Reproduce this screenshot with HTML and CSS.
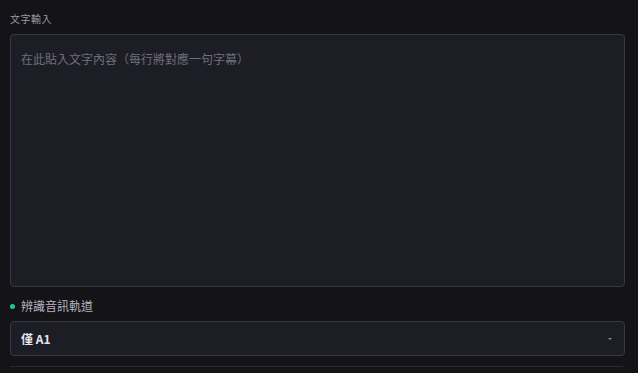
FILE: index.html
```html
<!DOCTYPE html>
<html lang="zh-Hant">
<head>
<meta charset="utf-8">
<link rel="stylesheet" href="styles.css">
</head>
<body>
<div class="page">
  <div class="field">
    <div class="label-small">文字輸入</div>
    <div class="textarea"><span class="placeholder">在此貼入文字內容（每行將對應一句字幕）</span></div>
  </div>
  <div class="field field-track">
    <div class="label-main"><span class="dot"></span>辨識音訊軌道</div>
    <div class="select">
      <span class="select-value">僅 A1</span>
      <span class="caret"></span>
    </div>
  </div>
  <div class="divider"></div>
</div>
</body>
</html>
```
FILE: styles.css
```css
html, body {
  margin: 0;
  padding: 0;
  background: #141318;
  height: 100%;
  overflow: hidden;
}
.page {
  width: 615px;
  padding: 12px 0 0 10px;
  font-family: "Noto Sans CJK TC", "Noto Sans", sans-serif;
}
.label-small {
  font-size: 10px;
  line-height: 14px;
  color: #9c9ba6;
  letter-spacing: 0.5px;
  margin-bottom: 8px;
}
.textarea {
  height: 253px;
  background: #1d1d26;
  border: 1px solid #393943;
  border-radius: 4px;
  padding: 10px 10px;
  box-sizing: border-box;
}
.placeholder {
  font-size: 12px;
  line-height: 18px;
  color: #706f7a;
}
.field-track {
  margin-top: 11px;
}
.label-main {
  display: flex;
  align-items: center;
  font-size: 12px;
  line-height: 16px;
  color: #b5b4bf;
  margin-bottom: 7px;
}
.dot {
  width: 5px;
  height: 5px;
  border-radius: 50%;
  background: #22c39a;
  margin: 0 6px 0 0;
}
.select {
  height: 35px;
  box-sizing: border-box;
  background: #1d1d26;
  border: 1px solid #393943;
  border-radius: 4px;
  display: flex;
  align-items: center;
  justify-content: space-between;
  padding: 0 12px 0 10px;
}
.select-value {
  font-size: 12px;
  font-weight: 700;
  color: #e6e5ee;
}
.caret {
  width: 0;
  height: 0;
  border-left: 2px solid transparent;
  border-right: 2px solid transparent;
  border-top: 2px solid #8a8994;
}
.divider {
  margin-top: 10px;
  height: 1px;
  width: 613px;
  background: #2a2a32;
}
```
